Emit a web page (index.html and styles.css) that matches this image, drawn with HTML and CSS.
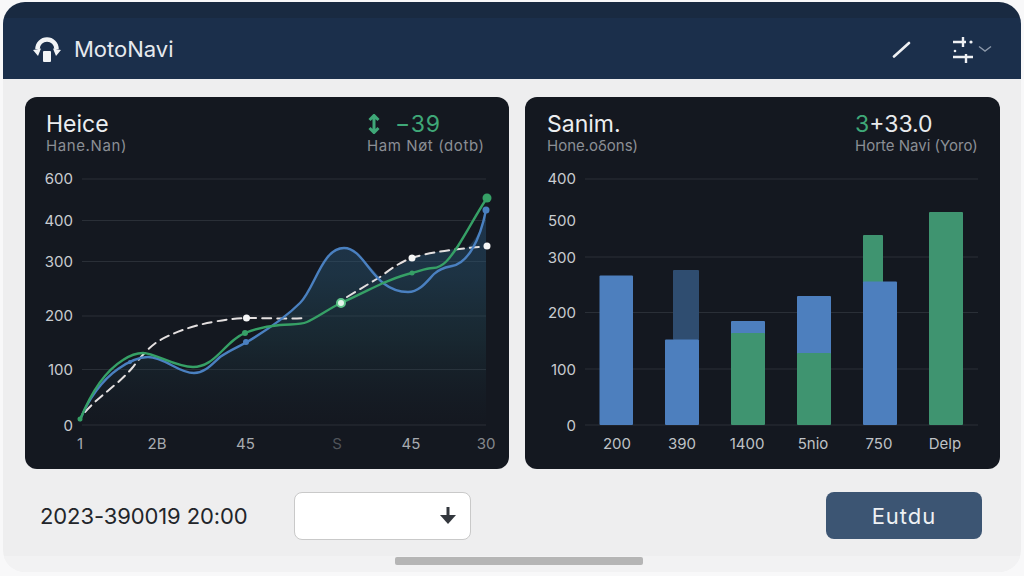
FILE: index.html
```html
<!DOCTYPE html>
<html lang="en">
<head>
    <meta charset="UTF-8">
    <meta name="viewport" content="width=device-width, initial-scale=1.0">
    <title>MotoNavi</title>
    <link rel="stylesheet" href="styles.css">
</head>
<body>
    <div class="app">
        <div class="top-strip"></div>
        <header class="header">
            <svg class="logo" viewBox="0 0 28 26">
                <path class="logo-arc" d="M4.500 13A9.500 9.500 0 0 1 23.500 13"/>
                <path class="logo-solid" d="M0 14L8 12.500L5 20ZM28 14L20 12.500L23 20Z"/>
                <rect class="logo-solid" x="10" y="15" width="8" height="11" rx="1"/>
            </svg>
            <span class="brand">MotoNavi</span>
            <svg class="icon-slash" viewBox="0 0 19 17">
                <path d="M2 15.500L17 2"/>
            </svg>
            <svg class="icon-sliders" viewBox="0 0 22 28">
                <path d="M1 7H14M11 2V12M1 22H21M14 19V28"/>
                <circle cx="19" cy="7" r="1.600"/>
                <circle cx="3" cy="16" r="1.300"/>
            </svg>
            <svg class="icon-chevron" viewBox="0 0 14 8">
                <path d="M1 1.500L7 6L13 1.500"/>
            </svg>
        </header>

        <main class="charts">
            <section class="card">
                <div class="card-head card-head-left">
                    <div>
                        <div class="card-title">Heice</div>
                        <div class="card-sub">Hane.Nan)</div>
                    </div>
                    <div>
                        <div class="card-value green">
                            <svg class="icon-updown" viewBox="0 0 14 20">
                                <path d="M7 1V19M2.500 6L7 1.500L11.500 6M2.500 14L7 18.500L11.500 14"/>
                            </svg>
                            <span>−39</span>
                        </div>
                        <div class="card-sub">Ham Nøt (dotb)</div>
                    </div>
                </div>
                <svg class="chart" viewBox="25 165 484 304">
                    <defs>
                        <linearGradient id="areaFill" gradientUnits="userSpaceOnUse" x1="0" y1="210" x2="0" y2="425">
                            <stop offset="0" stop-color="#2c5a86" stop-opacity="0.42"/>
                            <stop offset="0.3" stop-color="#2a5a78" stop-opacity="0.4"/>
                            <stop offset="0.6" stop-color="#24505c" stop-opacity="0.28"/>
                            <stop offset="1" stop-color="#1c3440" stop-opacity="0"/>
                        </linearGradient>
                    </defs>
                    <g class="grid">
                        <path d="M82 179H486M82 220.500H486M82 261.500H486M82 316H486M82 369.500H486M82 425H486"/>
                    </g>
                    <g class="y-labels">
                        <text x="73" y="184">600</text>
                        <text x="73" y="226">400</text>
                        <text x="73" y="267">300</text>
                        <text x="73" y="321">200</text>
                        <text x="73" y="375">100</text>
                        <text x="73" y="431">0</text>
                    </g>
                    <g class="x-labels">
                        <text x="80" y="449">1</text>
                        <text x="157" y="449">2B</text>
                        <text x="245.500" y="449">45</text>
                        <text class="faded" x="337" y="449">S</text>
                        <text x="411" y="449">45</text>
                        <text class="dim" x="486" y="449">30</text>
                    </g>
                    <path class="area" d="M80 420C88 400 102 380 118 369C128 362 138 357 148 357C165 357 178 373 194 373C205 373 212 364 220 357C230 350 238 347 247 342C262 333 285 318 300 303C315 288 322 248 344 248C358 248 368 266 380 277L412 258C430 252 450 249 467 248C476 240 484 225 486 210V425H80Z"/>
                    <path class="line-white" d="M85 412C100 395 118 385 133 367C140 358 146 350 157 342C170 334 190 326 213 322C228 319 240 318 247 318C262 318 285 319 305 318"/>
                    <path class="line-white" d="M347 297C360 289 372 282 380 277C392 268 402 261 412 258C430 252 450 250 487 246"/>
                    <path class="line-blue" d="M80 420C88 400 102 380 118 369C128 362 138 357 148 357C165 357 178 373 194 373C205 373 212 364 220 357C230 350 238 347 247 342C262 333 285 318 300 303C315 288 322 248 344 248C366 248 372 292 408 292C420 292 428 280 434 274C440 268 447 267 452 266C468 263 480 240 486 210"/>
                    <path class="line-green" d="M80 420C88 400 102 373 123 360C132 354 138 353 143 353C155 353 175 367 193 367C205 367 213 360 222 351C230 343 237 336 245 333C255 329 267 326 280 325C292 324 300 325 307 322C318 317 330 308 341 303C355 297 370 289 383 283C393 279 402 275 412 273C420 271 426 268 433 268C443 268 450 258 458 246C468 230 480 208 487 198"/>
                    <circle class="dot-blue" cx="130" cy="362" r="2"/>
                    <circle class="dot-blue" cx="246" cy="342" r="3"/>
                    <circle class="dot-blue" cx="486" cy="210" r="3.500"/>
                    <circle class="dot-green" cx="80" cy="419" r="2.500"/>
                    <circle class="dot-green" cx="245" cy="333" r="3"/>
                    <circle class="dot-green" cx="412" cy="273" r="2.500"/>
                    <circle class="dot-green" cx="487" cy="198" r="4.500"/>
                    <circle class="dot-white" cx="246.500" cy="318" r="3.500"/>
                    <circle class="dot-white" cx="412" cy="258" r="3.500"/>
                    <circle class="dot-white" cx="487" cy="246" r="3.500"/>
                    <circle class="dot-ring" cx="341" cy="303" r="4"/>
                </svg>
            </section>

            <section class="card">
                <div class="card-head card-head-right">
                    <div>
                        <div class="card-title">Sanim.</div>
                        <div class="card-sub">Hone.oδons)</div>
                    </div>
                    <div>
                        <div class="card-value"><span class="green">3</span>+33.0</div>
                        <div class="card-sub">Horte Navi (Yoro)</div>
                    </div>
                </div>
                <svg class="chart" viewBox="525 165 475 304">
                    <g class="grid">
                        <path d="M585 179H978M585 257H978M585 312.500H978M585 369H978M585 425H978"/>
                    </g>
                    <g class="y-labels">
                        <text x="576" y="184">400</text>
                        <text x="576" y="226">500</text>
                        <text x="576" y="263">300</text>
                        <text x="576" y="318">200</text>
                        <text x="576" y="375">100</text>
                        <text x="576" y="431">0</text>
                    </g>
                    <g class="x-labels bright">
                        <text x="617" y="449">200</text>
                        <text x="682" y="449">390</text>
                        <text x="747" y="449">1400</text>
                        <text x="813" y="449">5nio</text>
                        <text x="879" y="449">750</text>
                        <text x="945" y="449">Delp</text>
                    </g>
                    <rect class="bar-blue" x="599.500" y="275.500" width="33.500" height="149.500" rx="1"/>
                    <rect class="bar-dark" x="673" y="270" width="26" height="70" rx="1"/>
                    <rect class="bar-blue" x="665" y="339.500" width="34" height="85.500" rx="1"/>
                    <rect class="bar-blue" x="731" y="321" width="34" height="14" rx="1"/>
                    <rect class="bar-green" x="731" y="333" width="34" height="92" rx="1"/>
                    <rect class="bar-blue" x="797" y="296" width="34" height="60" rx="1"/>
                    <rect class="bar-green" x="797" y="353" width="34" height="72" rx="1"/>
                    <rect class="bar-green" x="863" y="235" width="20" height="50" rx="1"/>
                    <rect class="bar-blue" x="863" y="281.500" width="34" height="143.500" rx="1"/>
                    <rect class="bar-green" x="929" y="212" width="34" height="213" rx="1"/>
                </svg>
            </section>
        </main>

        <footer class="footer">
            <div class="date">2023-390019 20:00</div>
            <div class="select">
                <svg class="icon-down" viewBox="0 0 18 20">
                    <path d="M9 1V10" class="icon-down-stem"/>
                    <path d="M1 9H17L9 18Z"/>
                </svg>
            </div>
            <button class="action">Eutdu</button>
        </footer>
        <div class="home-strip"><div class="home-bar"></div></div>
    </div>
</body>
</html>
```

FILE: styles.css
```css
:root {
    --card-bg: #141820;
    --blue: #4d7fbe;
    --green: #3f9470;
    --green-bright: #3fa878;
    --text-muted: #8b8f95;
}

* {
    box-sizing: border-box;
}

body {
    margin: 0;
    width: 1024px;
    height: 576px;
    overflow: hidden;
    background: #f8f8f9;
    font-family: 'Inter', 'Liberation Sans', sans-serif;
}

.app {
    margin: 2px 3px 0;
    height: 570px;
    display: flex;
    flex-direction: column;
    background: #eeeeef;
    border-radius: 22px;
    overflow: hidden;
}

.top-strip {
    height: 16px;
    flex: none;
    background: #192a41;
}

.header {
    height: 61px;
    flex: none;
    display: flex;
    align-items: center;
    padding: 1px 29px 0 30px;
    background: #1b2f4b;
}

.logo {
    width: 28px;
    height: 26px;
    margin-right: 13px;
}

.logo-arc {
    fill: none;
    stroke: #f2f4f6;
    stroke-width: 4.5;
}

.logo-solid {
    fill: #f2f4f6;
}

.brand {
    font-size: 22px;
    color: #e6e9ee;
    margin-right: auto;
}

.icon-slash {
    width: 19px;
    height: 17px;
    margin-right: 41px;
}

.icon-slash path {
    fill: none;
    stroke: #eef0f3;
    stroke-width: 2.6;
    stroke-linecap: round;
}

.icon-sliders {
    width: 22px;
    height: 28px;
    margin-right: 4px;
}

.icon-sliders path {
    fill: none;
    stroke: #eef0f3;
    stroke-width: 2.4;
}

.icon-sliders circle {
    fill: #eef0f3;
}

.icon-chevron {
    width: 14px;
    height: 8px;
}

.icon-chevron path {
    fill: none;
    stroke: #8a97a8;
    stroke-width: 1.4;
}

.charts {
    display: grid;
    grid-template-columns: 484px 475px;
    gap: 16px;
    padding: 18px 22px 0;
    flex: none;
}

.card {
    height: 372px;
    background: var(--card-bg);
    border-radius: 12px;
    overflow: hidden;
}

.card-head {
    height: 68px;
    display: grid;
    padding-top: 14px;
}

.card-head-left {
    grid-template-columns: 321px 1fr;
    padding-left: 21px;
}

.card-head-left .card-sub {
    letter-spacing: 0.6px;
}

.card-head-right {
    grid-template-columns: 308px 1fr;
    padding-left: 22px;
}

.card-title {
    font-size: 23px;
    line-height: 26px;
    color: #eceef0;
}

.card-value {
    display: flex;
    align-items: center;
    font-size: 23px;
    line-height: 26px;
    color: #e8eaec;
}

.card-sub {
    font-size: 15px;
    line-height: 18px;
    color: var(--text-muted);
    white-space: nowrap;
}

.green {
    color: var(--green-bright);
}

.icon-updown {
    width: 14px;
    height: 20px;
    margin-right: 14px;
}

.icon-updown path {
    fill: none;
    stroke: var(--green-bright);
    stroke-width: 3;
}

.icon-updown + span {
    letter-spacing: 0.8px;
}

.chart {
    display: block;
    width: 100%;
    height: 304px;
}

.grid path {
    fill: none;
    stroke: #2a2f37;
    stroke-width: 1;
}

.y-labels text {
    font-size: 15px;
    fill: #c9ccd0;
    text-anchor: end;
}

.x-labels text {
    font-size: 15px;
    fill: #a8abb0;
    text-anchor: middle;
}

.x-labels.bright text {
    fill: #bfc2c6;
}

.x-labels .faded {
    fill: #50545a;
}

.x-labels .dim {
    fill: #85888d;
}

.area {
    fill: url(#areaFill);
}

.line-white,
.line-blue,
.line-green {
    fill: none;
    stroke-linecap: round;
}

.line-white {
    stroke: #e4e0e0;
    stroke-width: 2;
    stroke-dasharray: 9 6;
}

.line-blue {
    stroke: #4a80c0;
    stroke-width: 2.4;
}

.line-green {
    stroke: #36a066;
    stroke-width: 2.4;
}

.dot-blue {
    fill: #4a80c0;
}

.dot-green {
    fill: #36a066;
}

.dot-white {
    fill: #f6f6f6;
}

.dot-ring {
    fill: #e4f5ea;
    stroke: #5fc48a;
    stroke-width: 2;
}

.bar-blue {
    fill: var(--blue);
}

.bar-green {
    fill: var(--green);
}

.bar-dark {
    fill: #2f4d70;
}

.footer {
    height: 87px;
    flex: none;
    display: flex;
    align-items: flex-start;
    padding: 23px 39px 0 37px;
}

.date {
    width: 254px;
    font-size: 22px;
    letter-spacing: -0.1px;
    line-height: 48px;
    color: #22252a;
    white-space: nowrap;
}

.select {
    width: 177px;
    height: 48px;
    display: flex;
    align-items: center;
    justify-content: flex-end;
    padding-right: 13px;
    background: #fff;
    border: 1px solid #c9c9c9;
    border-radius: 8px;
}

.icon-down {
    width: 18px;
    height: 20px;
}

.icon-down path {
    fill: #33373d;
}

.icon-down .icon-down-stem {
    fill: none;
    stroke: #33373d;
    stroke-width: 3;
}

.action {
    width: 156px;
    height: 47px;
    margin-left: auto;
    background: #3c5573;
    color: #eef1f4;
    border: none;
    border-radius: 8px;
    font-family: inherit;
    font-size: 22px;
    letter-spacing: 1px;
}

.home-strip {
    height: 16px;
    flex: none;
    background: #f2f2f3;
    display: flex;
    justify-content: center;
    padding: 1px 0 0 14px;
}

.home-bar {
    width: 248px;
    height: 8px;
    background: #b5b5b5;
    border-radius: 2px;
}
```
